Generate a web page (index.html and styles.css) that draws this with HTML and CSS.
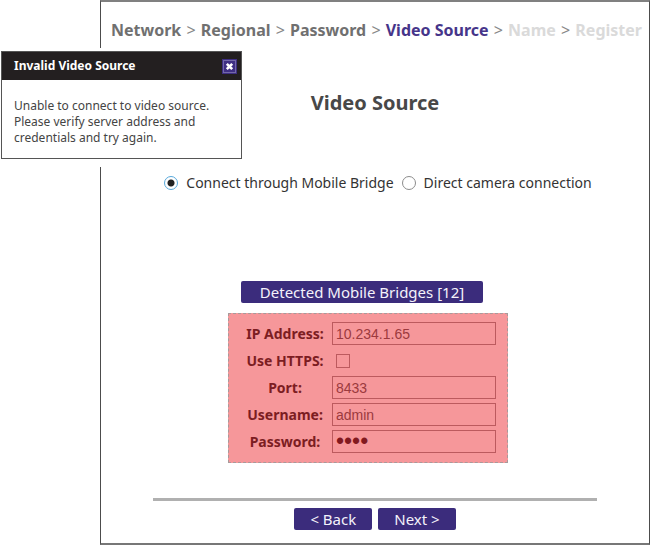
FILE: index.html
```html
<!DOCTYPE html>
<html lang="en">
<head>
<meta charset="utf-8">
<title>Video Source</title>
<link rel="stylesheet" href="styles.css">
</head>
<body>
<main class="wizard">
  <nav class="steps">
    <span class="step">Network</span>
    <span class="sep">&gt;</span>
    <span class="step">Regional</span>
    <span class="sep">&gt;</span>
    <span class="step">Password</span>
    <span class="sep">&gt;</span>
    <span class="step current">Video Source</span>
    <span class="sep">&gt;</span>
    <span class="step pending">Name</span>
    <span class="sep">&gt;</span>
    <span class="step pending">Register</span>
  </nav>
  <h1 class="title">Video Source</h1>
  <form class="source">
    <div class="modes">
      <input class="radio" type="radio" name="mode" id="bridge" checked>
      <label for="bridge">Connect through Mobile Bridge</label>
      <input class="radio" type="radio" name="mode" id="direct">
      <label for="direct">Direct camera connection</label>
    </div>
    <div class="bridge">
      <button class="button detected" type="button">Detected Mobile Bridges [12]</button>
      <div class="fields">
        <label for="ip">IP Address:</label>
        <input class="text" id="ip" type="text" value="10.234.1.65">
        <label for="https">Use HTTPS:</label>
        <input class="check" id="https" type="checkbox">
        <label for="port">Port:</label>
        <input class="text" id="port" type="text" value="8433">
        <label for="user">Username:</label>
        <input class="text" id="user" type="text" value="admin">
        <label for="pass">Password:</label>
        <input class="text password" id="pass" type="password" value="pass">
      </div>
    </div>
    <hr class="rule">
    <div class="actions">
      <button class="button" type="button">&lt; Back</button>
      <button class="button" type="button">Next &gt;</button>
    </div>
  </form>
</main>
<section class="dialog" role="dialog" aria-labelledby="dialog-title">
  <header class="dialog-head">
    <h2 class="dialog-title" id="dialog-title">Invalid Video Source</h2>
    <button class="close" type="button" aria-label="Close">
      <svg viewBox="0 0 15 15" width="15" height="15"><rect x="1.5" y="1.5" width="12" height="12" fill="none" stroke="#a9a2cf" stroke-dasharray="1 1"/><path d="M4.8 4.8l5.4 5.4M10.2 4.8l-5.4 5.4" stroke="#fff" stroke-width="2.6"/></svg>
    </button>
  </header>
  <p class="dialog-text">Unable to connect to video source. Please verify server address and credentials and try again.</p>
</section>
</body>
</html>
```
FILE: styles.css
```css
* {
  box-sizing: border-box;
}

body {
  margin: 0;
  background: #fff;
  color: #333;
  font: 14px/20px "Noto Sans", sans-serif;
}

.wizard {
  min-height: 100vh;
  margin-left: 100px;
  border: 1px solid #4c4c4c;
  border-top: 2px solid #808080;
  border-bottom: 2px solid #777;
}

.steps {
  padding: 16px 0 0 10px;
  font-size: 16px;
  line-height: 24px;
  white-space: nowrap;
  color: #888;
}

.sep {
  margin: 0 1px;
}

.step {
  font-weight: 700;
  color: #707070;
}

.current {
  color: #46358a;
}

.pending {
  color: #dadada;
}

.title {
  margin: 47px 0 0;
  font-size: 20px;
  line-height: 28px;
  text-align: center;
  color: #484848;
}

.source {
  display: flex;
  flex-direction: column;
  align-items: center;
  margin-top: 56px;
}

.modes {
  display: flex;
  align-items: center;
  gap: 8px;
  padding-left: 6px;
  white-space: nowrap;
}

.radio {
  appearance: none;
  width: 14px;
  height: 14px;
  margin: 0;
  border: 1px solid #8c8c8c;
  border-radius: 50%;
  background: #fff;
}

.radio:checked {
  border-color: #58a9dc;
  background: radial-gradient(circle, #222 3px, #fff 4px);
}

.bridge {
  display: flex;
  flex-direction: column;
  align-items: center;
  margin-top: 88px;
  padding-right: 14px;
}

.button {
  height: 22px;
  padding: 0 16px;
  border: 0;
  border-radius: 2px;
  background: #3b2c7c;
  color: #f4f2fa;
  font: inherit;
  font-size: 15px;
}

.detected {
  margin-right: 12px;
  padding: 0 19px;
}

.fields {
  display: grid;
  grid-template-columns: 80px 164px;
  grid-auto-rows: 23px;
  gap: 4px 7px;
  align-items: center;
  margin-top: 10px;
  padding: 8px 11px 9px 16px;
  border: 1px dashed #a89a9a;
  background: #f6979a;
  color: #7c1d22;
  font-weight: 700;
  text-align: center;
  white-space: nowrap;
}

.text {
  width: 100%;
  height: 23px;
  padding: 0 3px;
  border: 1px solid #bc5a5e;
  background: transparent;
  color: #9c3a3e;
  font: 14px/20px "Liberation Sans", sans-serif;
}

.password {
  color: #82191f;
  font-size: 23px;
}

.check {
  appearance: none;
  width: 14px;
  height: 14px;
  margin: 0 4px;
  border: 1px solid #bc5a5e;
}

.rule {
  width: 81%;
  height: 3px;
  margin: 35px 0 7px;
  border: 0;
  background: #b0b0b0;
}

.actions {
  display: flex;
  gap: 6px;
}

.dialog {
  position: absolute;
  top: 51px;
  left: 1px;
  width: 241px;
  border: 1px solid #555;
  background: #fff;
  box-shadow: 0 0 0 3px #fff, 0 4px 0 4px #fff;
}

.dialog-head {
  display: flex;
  align-items: center;
  justify-content: space-between;
  height: 28px;
  padding: 0 4px 0 12px;
  background: #231f20;
}

.dialog-title {
  margin: 0;
  font-size: 12px;
  line-height: 16px;
  color: #fff;
}

.close {
  display: flex;
  padding: 0;
  border: 0;
  background: #3f2f83;
}

.dialog-text {
  margin: 0;
  padding: 18px 30px 12px 12px;
  font-size: 12px;
  line-height: 16px;
  color: #444;
}
```
